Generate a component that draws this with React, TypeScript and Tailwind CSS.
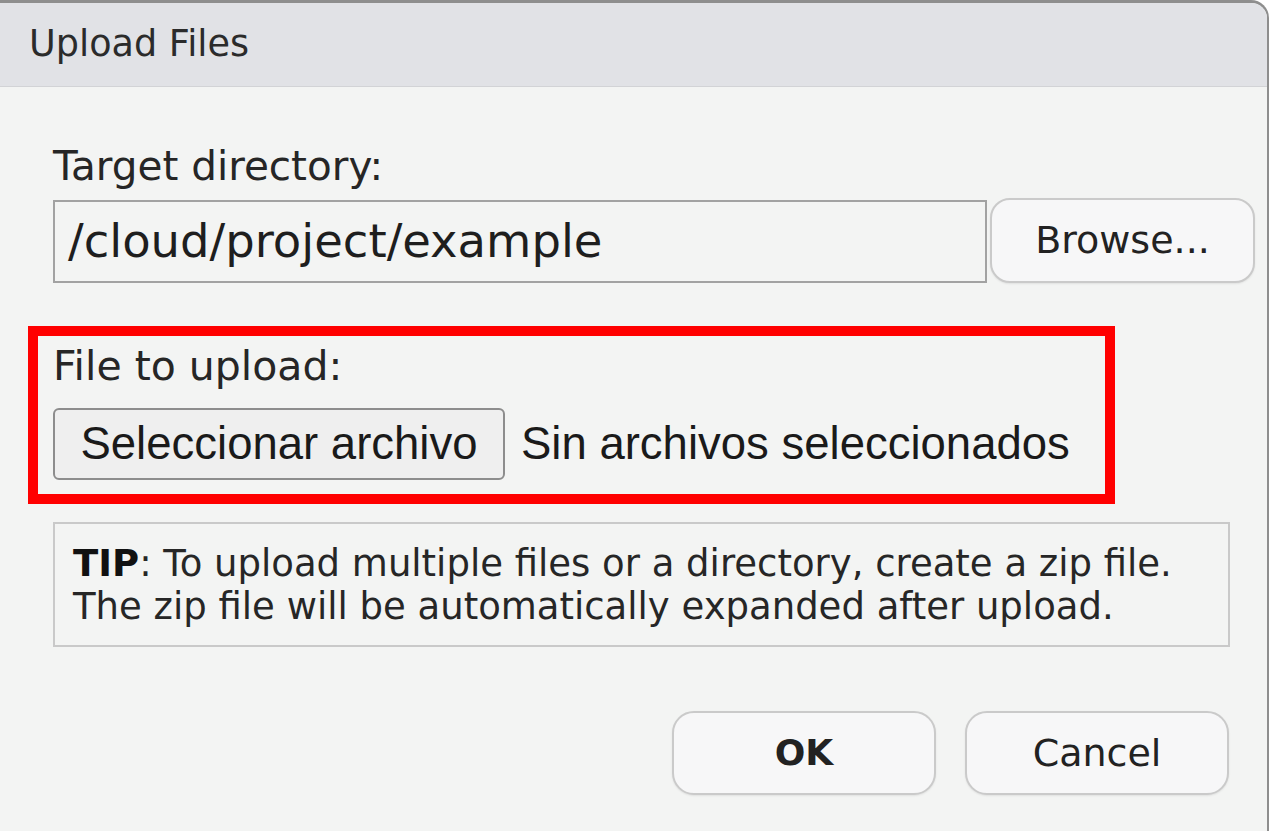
export default function App() {
  const ui = "font-['DejaVu_Sans',sans-serif]";
  const arial = "font-['Liberation_Sans',Arial,sans-serif]";

  return (
    <div className="w-[1272px] h-[831px] bg-white overflow-hidden">
      <div className={`w-[1269px] h-[831px] bg-[#f3f4f3] border-t-[3px] border-r-[2px] border-[#8e8e8e] rounded-tr-[18px] overflow-hidden flex flex-col ${ui}`}>
        {/* titlebar */}
        <div className="h-[84px] shrink-0 bg-[#e1e2e6] border-b border-[#d2d3d6] flex items-center pl-[29px]">
          <span className="text-[36.6px] leading-none text-[#2b2b2b]">Upload Files</span>
        </div>

        {/* body */}
        <div className="flex flex-col pl-[28px] pt-[56px]">
          <div className="pl-[25px]">
            <div className="text-[40.5px] leading-[47px] text-[#262626]">Target directory:</div>
            <div className="flex mt-[10px]">
              <div className="w-[934px] h-[83px] border-2 border-[#a2a2a2] flex items-center pl-[13px] text-[46.5px] text-[#1e1e1e]">
                /cloud/project/example
              </div>
              <button className="ml-[3px] -mt-[2px] w-[265px] h-[85px] rounded-[20px] border-2 border-[#cacaca] bg-[#f7f7f8] text-[38px] text-[#222] shadow-[0_1px_2px_rgba(0,0,0,0.08)]">
                Browse...
              </button>
            </div>
          </div>

          {/* highlighted file chooser */}
          <div className="mt-[43px] w-[1087px] h-[178px] border-[10px] border-[#ff0000] pl-[15px] pt-[7px]">
            <div className="text-[41px] leading-[47px] text-[#262626]">File to upload:</div>
            <div className={`flex items-center mt-[18px] ${arial}`}>
              <button className="w-[452px] h-[72px] rounded-[6px] border-2 border-[#8d8d8d] bg-[#efefef] text-[45.5px] text-[#1a1a1a]">
                Seleccionar archivo
              </button>
              <span className="ml-[16px] text-[45.5px] text-[#1a1a1a]">Sin archivos seleccionados</span>
            </div>
          </div>

          {/* tip */}
          <div className="ml-[25px] mt-[18px] w-[1177px] h-[125px] border-2 border-[#c9c9c9] flex flex-col justify-center pl-[18px] text-[37px] leading-[43px] text-[#262626]">
            <div>
              <span className="font-bold text-[#111]">TIP</span>: To upload multiple files or a directory, create a zip file.
            </div>
            <div>The zip file will be automatically expanded after upload.</div>
          </div>

          {/* actions */}
          <div className="ml-[25px] w-[1176px] flex justify-end gap-[29px] mt-[64px]">
            <button className="w-[264px] h-[84px] rounded-[22px] border-2 border-[#cacaca] bg-[#f7f7f8] text-[36px] font-bold text-[#222] shadow-[0_1px_2px_rgba(0,0,0,0.08)]">
              OK
            </button>
            <button className="w-[264px] h-[84px] rounded-[22px] border-2 border-[#cacaca] bg-[#f7f7f8] text-[38px] text-[#222] shadow-[0_1px_2px_rgba(0,0,0,0.08)]">
              Cancel
            </button>
          </div>
        </div>
      </div>
    </div>
  );
}
